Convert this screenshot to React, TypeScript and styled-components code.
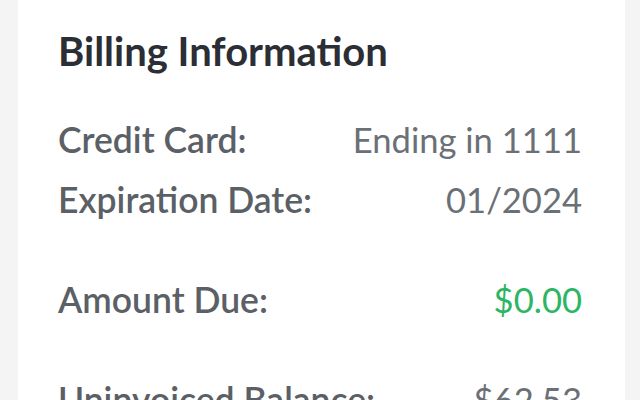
import React from 'react';
import styled, { createGlobalStyle } from 'styled-components';

const GlobalStyle = createGlobalStyle`
  html, body {
    margin: 0;
    padding: 0;
    background: #f4f4f4;
    overflow: hidden;
  }
  body {
    font-family: Lato, "Open Sans", sans-serif;
  }
`;

const Page = styled.div`
  display: flex;
  height: 400px;
  padding: 0 15px 0 18px;
`;

const Card = styled.section`
  flex: 1;
  background: #ffffff;
  padding: 27px 43px 0 40px;
  overflow: hidden;
`;

const Title = styled.h2`
  margin: 0 0 35px;
  font-size: 40px;
  font-weight: 700;
  line-height: 48px;
  color: #2b2e35;
`;

const Group = styled.div`
  margin-bottom: 40px;
`;

const Row = styled.div`
  display: flex;
  justify-content: space-between;
  align-items: baseline;
  height: 60px;
  line-height: 60px;
`;

const Label = styled.span`
  font-size: 35.5px;
  font-weight: 600;
  color: #5b5f66;
`;

const Value = styled.span<{ tone?: 'green' }>`
  font-size: 34.6px;
  font-weight: 400;
  color: ${({ tone }) => (tone === 'green' ? '#2bb565' : '#6b6f76')};
`;

export default function App() {
  return (
    <>
      <GlobalStyle />
      <Page>
        <Card>
          <Title>Billing Information</Title>
          <Group>
            <Row>
              <Label>Credit Card:</Label>
              <Value>Ending in 1111</Value>
            </Row>
            <Row>
              <Label>Expiration Date:</Label>
              <Value>01/2024</Value>
            </Row>
          </Group>
          <Group>
            <Row>
              <Label>Amount Due:</Label>
              <Value tone="green">$0.00</Value>
            </Row>
          </Group>
          <Group>
            <Row>
              <Label>Uninvoiced Balance:</Label>
              <Value>$62.53</Value>
            </Row>
          </Group>
        </Card>
      </Page>
    </>
  );
}
